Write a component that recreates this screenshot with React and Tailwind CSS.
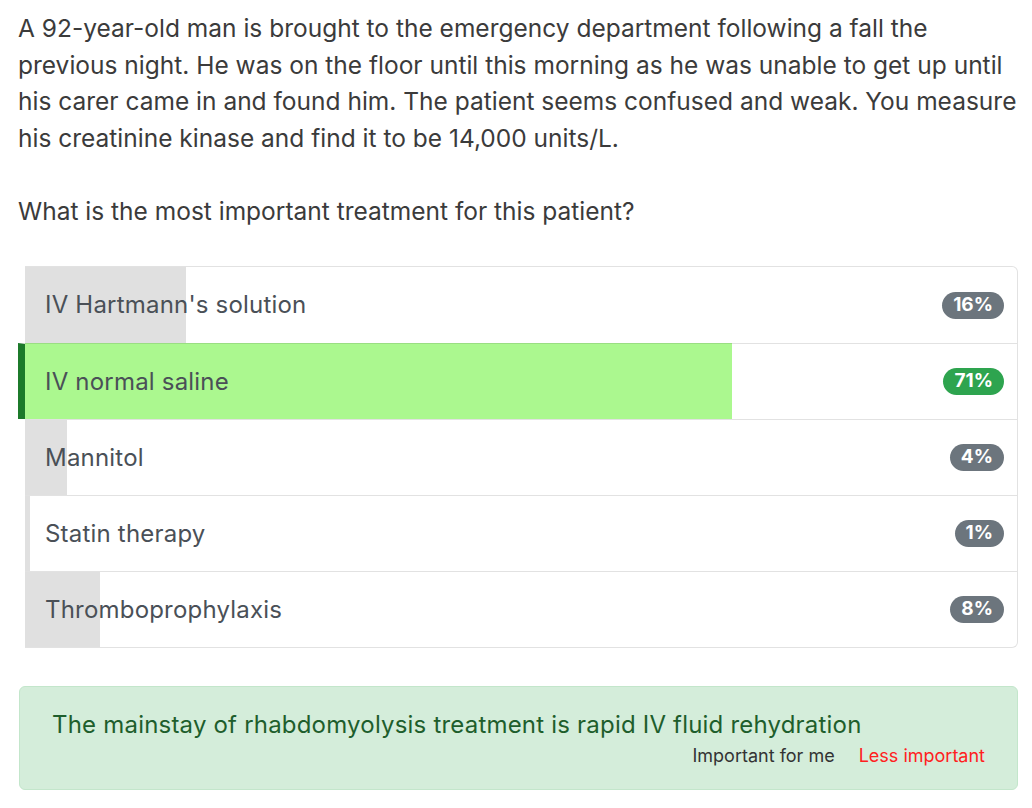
import React from 'react';

const OPTIONS = [
  { label: "IV Hartmann's solution", pct: 16, bar: 161 },
  { label: 'IV normal saline', pct: 71, bar: 707, correct: true },
  { label: 'Mannitol', pct: 4, bar: 42 },
  { label: 'Statin therapy', pct: 1, bar: 5 },
  { label: 'Thromboprophylaxis', pct: 8, bar: 75 },
];

function OptionRow({ option, first }) {
  const rowClass = option.correct
    ? 'relative flex items-center h-[76px] -ml-[7px] border-l-[7px] border-l-[#1c7a2a] border-t border-t-[#e2e2e2]'
    : `relative flex items-center h-[76px] ${first ? '' : 'border-t border-t-[#e2e2e2]'}`;
  return (
    <div className={rowClass}>
      <div
        className={`absolute left-0 bottom-0 ${option.correct ? '-top-px border-t border-t-[#9ade83] bg-[#abf88f]' : 'top-0 bg-[#e0e0e0]'}`}
        style={{ width: option.bar }}
      />
      <span className="relative pl-[20px] text-[24px] tracking-[0.2px] text-[#4a5057]">{option.label}</span>
      <span
        className={`relative ml-auto mr-[13px] h-[27px] px-[11px] rounded-full flex items-center text-[19px] font-bold text-white ${option.correct ? 'bg-[#2ea44f]' : 'bg-[#6c757d]'}`}
      >
        {option.pct}%
      </span>
    </div>
  );
}

export default function App() {
  return (
    <div className="w-[1032px] h-[808px] bg-white pl-[19px] pt-[10px] font-['Inter',sans-serif] overflow-hidden">
      <p className="w-[1000px] text-[24.5px] leading-[36.5px] text-[#3b3b3b] -ml-[1px]">
        A 92-year-old man is brought to the emergency department following a fall the previous night. He was on the floor until this morning as he was unable to get up until his carer came in and found him. The patient seems confused and weak. You measure his creatinine kinase and find it to be 14,000 units/L.
        <br />
        <br />
        What is the most important treatment for this patient?
      </p>

      <div className="mt-[37px] ml-[6px] w-[993px] border border-[#e2e2e2] border-l-0 rounded-r-[6px]">
        {OPTIONS.map((o, i) => (
          <OptionRow key={o.label} option={o} first={i === 0} />
        ))}
      </div>

      <div className="mt-[38px] w-[999px] h-[104px] bg-[#d4edda] border border-[#c3e6cb] rounded-[6px] pl-[32px] pr-[32px] pt-[22px]">
        <div className="text-[24px] leading-[32px] tracking-[0.2px] text-[#1e5e2c]">
          The mainstay of rhabdomyolysis treatment is rapid IV fluid rehydration
        </div>
        <div className="flex justify-end gap-[24px] text-[18px] leading-[24px] mt-[3px]">
          <span className="text-[#333]">Important for me</span>
          <span className="text-[#ff2020]">Less important</span>
        </div>
      </div>
    </div>
  );
}
